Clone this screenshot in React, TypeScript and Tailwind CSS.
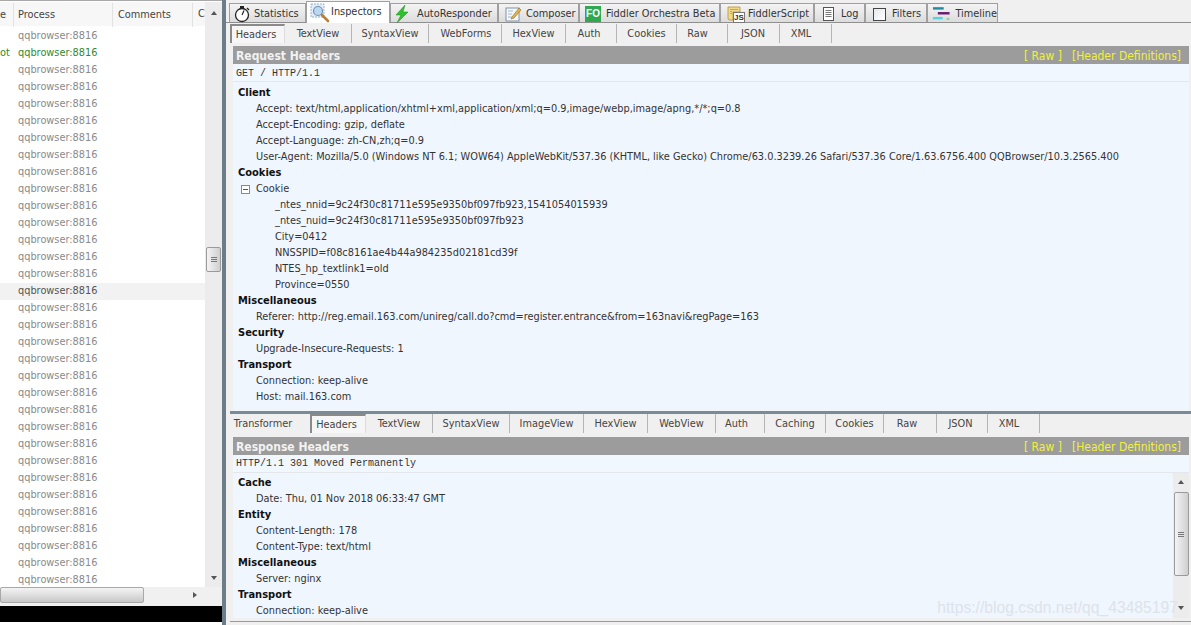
import React from 'react';

const StopwatchIcon = () => (
  <svg width="18" height="18" viewBox="0 0 18 18" fill="none">
    <circle cx="8" cy="10" r="6.5" stroke="#222" strokeWidth="1.3" fill="#fff" />
    <rect x="6" y="1" width="4" height="2" fill="#222" />
    <path d="M8 10 L10 5.5" stroke="#222" strokeWidth="1.2" />
    <path d="M13 3 L15 5" stroke="#222" strokeWidth="1.2" />
  </svg>
);

const InspectorIcon = () => (
  <svg width="20" height="20" viewBox="0 0 20 20" fill="none">
    <rect x="1" y="1" width="13" height="13" fill="#e4edf6" stroke="#9ab2cc" strokeDasharray="2 1" />
    <circle cx="8" cy="8" r="4.5" fill="#bcd7f0" stroke="#6f93b8" strokeWidth="1.2" />
    <path d="M12 12 L18 18" stroke="#b9803a" strokeWidth="2.6" strokeLinecap="round" />
  </svg>
);

const BoltIcon = () => (
  <svg width="18" height="18" viewBox="0 0 18 18">
    <path d="M12 0 L3 10 L8 10 L4 18 L15 7 L10 7 Z" fill="#2fc02f" stroke="#1c8f1c" strokeWidth="0.5" />
  </svg>
);

const ComposerIcon = () => (
  <svg width="18" height="18" viewBox="0 0 18 18" fill="none">
    <rect x="1" y="3" width="13" height="13" fill="#f4f7fb" stroke="#7f93a8" />
    <path d="M3 6 H8 M3 9 H7 M3 12 H7" stroke="#a9b8c8" />
    <path d="M7 12 L14 3 L16 5 L9 13 L6 14 Z" fill="#e2b44a" stroke="#8f6c20" strokeWidth="0.6" />
  </svg>
);

const ScriptIcon = () => (
  <div className="relative h-[18px] w-[18px]">
    <svg width="18" height="18" viewBox="0 0 18 18" fill="none">
      <path d="M1 2 H13 V7 H6 V15 H3 Q1 15 1 13 Z" fill="#f3d98a" stroke="#b08f30" strokeWidth="0.8" />
      <path d="M3 4.5 H11 M3 6.5 H5 M3 8.5 H5" stroke="#b08f30" strokeWidth="0.7" />
    </svg>
    <span className="absolute bottom-0 right-0 flex h-[11px] w-[12px] items-center justify-center border border-[#777] bg-white font-['Liberation_Sans',sans-serif] text-[8px] font-bold leading-none text-[#333]">
      JS
    </span>
  </div>
);

const LogIcon = () => (
  <svg width="14" height="16" viewBox="0 0 14 16" fill="none">
    <rect x="1.5" y="1.5" width="10" height="13" fill="#fff" stroke="#555" />
    <path d="M3.5 4.5 H9.5 M3.5 6.5 H9.5 M3.5 8.5 H9.5 M3.5 10.5 H9.5" stroke="#777" />
  </svg>
);

const TimelineIcon = () => (
  <svg width="20" height="16" viewBox="0 0 20 16">
    <rect x="1" y="1" width="11" height="2.5" fill="#1f8ea3" />
    <rect x="6" y="6" width="12" height="2.5" fill="#6a1b6e" />
    <rect x="1" y="11" width="10" height="2.5" fill="#4fd6e0" />
    <rect x="15" y="12" width="3" height="2" fill="#8fd0a0" />
  </svg>
);

const topTabs = [
  { label: 'Statistics', cls: 'w-[77px] pl-[4px] gap-[2px]', icon: <StopwatchIcon /> },
  { label: 'Inspectors', cls: 'w-[84px] pl-[3px] gap-[1px]', icon: <InspectorIcon />, active: true },
  { label: 'AutoResponder', cls: 'w-[108px] pl-[2px] gap-[6px]', icon: <BoltIcon /> },
  { label: 'Composer', cls: 'w-[81px] pl-[6px] gap-[3px]', icon: <ComposerIcon /> },
  {
    label: 'Fiddler Orchestra Beta',
    cls: 'w-[141px] pl-[5px] gap-[5px]',
    icon: (
      <span className="flex h-[16px] w-[16px] items-center justify-center bg-[#2fa84f] font-['Liberation_Sans',sans-serif] text-[10px] font-bold leading-none text-white">
        FO
      </span>
    ),
  },
  { label: 'FiddlerScript', cls: 'w-[94px] pl-[6px] gap-[3px]', icon: <ScriptIcon /> },
  { label: 'Log', cls: 'w-[51px] pl-[7px] gap-[5px]', icon: <LogIcon /> },
  {
    label: 'Filters',
    cls: 'w-[62px] pl-[7px] gap-[6px]',
    icon: <span className="h-[13px] w-[13px] border border-[#444] bg-[linear-gradient(135deg,#e4e9ee,#fff)]" />,
  },
  { label: 'Timeline', cls: 'w-[71px] pl-[4px] gap-[4px]', icon: <TimelineIcon /> },
];

const requestTabs = [
  { label: 'Headers', w: 'w-[55px]', active: true },
  { label: 'TextView', w: 'w-[67px]' },
  { label: 'SyntaxView', w: 'w-[77px]' },
  { label: 'WebForms', w: 'w-[73px] pl-[2px]' },
  { label: 'HexView', w: 'w-[64px]' },
  { label: 'Auth', w: 'w-[51px] pr-[4px]' },
  { label: 'Cookies', w: 'w-[60px]' },
  { label: 'Raw', w: 'w-[51px] pr-[9px]' },
  { label: 'JSON', w: 'w-[52px] pr-[1px]' },
  { label: 'XML', w: 'w-[52px] pr-[9px]' },
];

const responseTabs = [
  { label: 'Transformer', w: 'w-[80px] pr-[14px] border-r-0' },
  { label: 'Headers', w: 'w-[56px]', active: true },
  { label: 'TextView', w: 'w-[67px]' },
  { label: 'SyntaxView', w: 'w-[77px]' },
  { label: 'ImageView', w: 'w-[74px]' },
  { label: 'HexView', w: 'w-[64px]' },
  { label: 'WebView', w: 'w-[68px]' },
  { label: 'Auth', w: 'w-[49px] pr-[7px]' },
  { label: 'Caching', w: 'w-[61px]' },
  { label: 'Cookies', w: 'w-[58px]' },
  { label: 'Raw', w: 'w-[53px] pr-[6px]' },
  { label: 'JSON', w: 'w-[51px] pr-[3px]' },
  { label: 'XML', w: 'w-[52px] pr-[9px]' },
];

const rows = Array.from({ length: 33 }, (_, i) => i);

const SubTabs = ({ tabs }: { tabs: { label: string; w: string; active?: boolean }[] }) => (
  <div className="flex h-[19px] items-stretch">
    {tabs.map((t) => (
      <div
        key={t.label}
        className={`flex ${t.w} items-center justify-center pt-[1px] text-[#444] ${
          t.active
            ? 'border-l-2 border-t-2 border-r border-[#8a8a8a] border-r-[#ddd] bg-[#f6f6f6] pr-[4px] text-[#111]'
            : 'border-r border-[#b5b5b5]'
        }`}
      >
        {t.label}
      </div>
    ))}
  </div>
);

const GroupRow = ({ label }: { label: string }) => (
  <div className="h-[16px] pl-[5px] text-[11px] font-bold leading-[16px] text-[#111]">{label}</div>
);

const HeaderRow = ({ text }: { text: string }) => (
  <div className="h-[16px] whitespace-nowrap pl-[23px] leading-[16px] text-[#333]">{text}</div>
);

const CookieRow = ({ text }: { text: string }) => (
  <div className="h-[16px] whitespace-nowrap pl-[42px] leading-[16px] text-[#333]">{text}</div>
);

const TitleBar = ({ title }: { title: string }) => (
  <div className="flex h-[18px] items-center justify-between bg-[#9c9c9c] pl-[3px] pr-[8px] pt-[1px]">
    <span className="text-[12px] font-bold text-[#f2f2f2]">{title}</span>
    <span className="flex gap-[10px] text-[12px] text-[#f0f03c]">
      <span>[ Raw ]</span>
      <span>[Header Definitions]</span>
    </span>
  </div>
);

const Arrow = ({ dir }: { dir: 'up' | 'down' | 'right' }) => (
  <svg width="8" height="8" viewBox="0 0 8 8" className="shrink-0">
    {dir === 'up' && <path d="M1 6 L4 2 L7 6 Z" fill="#555" />}
    {dir === 'down' && <path d="M1 2 L7 2 L4 6 Z" fill="#555" />}
    {dir === 'right' && <path d="M2 1 L6 4 L2 7 Z" fill="#555" />}
  </svg>
);

const Grip = () => (
  <span className="flex flex-col gap-px">
    <span className="h-px w-[6px] bg-[#777]" />
    <span className="h-px w-[6px] bg-[#777]" />
    <span className="h-px w-[6px] bg-[#777]" />
  </span>
);

export default function App() {
  return (
    <div className="flex h-[625px] w-[1191px] overflow-hidden bg-[#f0f0f0] font-['DejaVu_Sans',sans-serif] text-[10.87px] font-stretch-condensed">
      {/* Session list */}
      <div className="flex w-[222px] shrink-0 flex-col border-t border-[#a8a8a8] bg-white pt-[1px]">
        <div className="flex h-[585px]">
          <div className="flex w-[205px] flex-col overflow-hidden">
            <div className="flex h-[24px] shrink-0 items-center bg-[#f7f7f7] pt-[1px] text-[#444]">
              <div className="w-[14px] overflow-hidden border-r border-[#e2e2e2] leading-[24px]">e</div>
              <div className="w-[99px] border-r border-[#e2e2e2] pl-[4px] leading-[24px]">Process</div>
              <div className="w-[80px] border-r border-[#e2e2e2] pl-[5px] leading-[24px]">Comments</div>
              <div className="pl-[5px]">C</div>
            </div>
            <div className="pt-[2px]">
              {rows.map((i) => (
                <div
                  key={i}
                  className={`flex h-[17px] items-center ${
                    i === 15 ? 'bg-[#f2f2f2] text-[#555]' : i === 1 ? 'text-[#2f8a2f]' : 'text-[#8a8a8a]'
                  }`}
                >
                  <span className="w-[18px] shrink-0">{i === 1 ? 'ot' : ''}</span>
                  <span>qqbrowser:8816</span>
                </div>
              ))}
            </div>
          </div>
          <div className="flex w-[17px] flex-col items-center bg-[#ececec] pt-[7px]">
            <Arrow dir="up" />
            <div className="mt-[230px] flex h-[25px] w-[15px] shrink-0 items-center justify-center rounded-[2px] border border-[#9a9a9a] bg-[linear-gradient(90deg,#f4f4f4,#cfcfcf)]">
              <Grip />
            </div>
            <div className="mt-[302px]">
              <Arrow dir="down" />
            </div>
          </div>
        </div>
        <div className="flex h-[16px] items-center bg-[#f0f0f0]">
          <div className="h-full w-[144px] rounded-[2px] border border-[#a8a8a8] bg-[linear-gradient(180deg,#f4f4f4,#c8c8c8)]" />
          <div className="ml-[47px]">
            <Arrow dir="right" />
          </div>
        </div>
        <div className="h-[3px] bg-[#f0f0f0]" />
        <div className="h-[16px] bg-black" />
        <div className="flex-1 bg-white" />
      </div>

      {/* Splitter */}
      <div className="w-[4px] shrink-0 bg-[#6c7c89]" />

      {/* Inspectors */}
      <div className="relative flex min-w-0 flex-1 flex-col pt-[3px]">
        <div className="flex h-[20px] items-end border-b border-[#8f8f8f] pl-[3px]">
          {topTabs.map((t) => (
            <div
              key={t.label}
              className={`flex ${t.cls} items-center whitespace-nowrap border border-b-0 border-[#a0a0a0] text-[#333] ${
                t.active ? '-mb-px h-[22px] bg-white' : 'h-[19px] bg-[linear-gradient(180deg,#f4f4f4,#dcdcdc)] pt-[2px]'
              }`}
            >
              {t.icon}
              <span>{t.label}</span>
            </div>
          ))}
        </div>

        {/* Request */}
        <div className="flex flex-col pl-[4px] pt-[1px]">
          <SubTabs tabs={requestTabs} />
          <div className="ml-[3px] mr-[2px] mt-[3px]">
            <TitleBar title="Request Headers" />
            <div className="h-[18px] border-b border-[#e4e8ec] bg-[#f1f7fe] pl-[3px] font-['Liberation_Mono',monospace] text-[10px] leading-[19px] text-[#333]">
              GET / HTTP/1.1
            </div>
            <div className="h-[329px] bg-[#f0f6fe] pt-[3px]">
              <GroupRow label="Client" />
              <HeaderRow text="Accept: text/html,application/xhtml+xml,application/xml;q=0.9,image/webp,image/apng,*/*;q=0.8" />
              <HeaderRow text="Accept-Encoding: gzip, deflate" />
              <HeaderRow text="Accept-Language: zh-CN,zh;q=0.9" />
              <HeaderRow text="User-Agent: Mozilla/5.0 (Windows NT 6.1; WOW64) AppleWebKit/537.36 (KHTML, like Gecko) Chrome/63.0.3239.26 Safari/537.36 Core/1.63.6756.400 QQBrowser/10.3.2565.400" />
              <GroupRow label="Cookies" />
              <div className="flex h-[16px] items-center pl-[8px] text-[#333]">
                <span className="flex h-[9px] w-[9px] items-center justify-center border border-[#8a8a8a] bg-white">
                  <span className="h-px w-[5px] bg-[#555]" />
                </span>
                <span className="ml-[6px]">Cookie</span>
              </div>
              <CookieRow text="_ntes_nnid=9c24f30c81711e595e9350bf097fb923,1541054015939" />
              <CookieRow text="_ntes_nuid=9c24f30c81711e595e9350bf097fb923" />
              <CookieRow text="City=0412" />
              <CookieRow text="NNSSPID=f08c8161ae4b44a984235d02181cd39f" />
              <CookieRow text="NTES_hp_textlink1=old" />
              <CookieRow text="Province=0550" />
              <GroupRow label="Miscellaneous" />
              <HeaderRow text="Referer: http://reg.email.163.com/unireg/call.do?cmd=register.entrance&from=163navi&regPage=163" />
              <GroupRow label="Security" />
              <HeaderRow text="Upgrade-Insecure-Requests: 1" />
              <GroupRow label="Transport" />
              <HeaderRow text="Connection: keep-alive" />
              <HeaderRow text="Host: mail.163.com" />
            </div>
          </div>
        </div>

        {/* Horizontal splitter */}
        <div className="ml-[4px] h-[3px] shrink-0 bg-[#7b8a96]" />

        {/* Response */}
        <div className="flex flex-col pl-[4px]">
          <SubTabs tabs={responseTabs} />
          <div className="ml-[3px] mr-[2px] mt-[4px]">
            <TitleBar title="Response Headers" />
            <div className="h-[18px] border-b border-[#e4e8ec] bg-[#f1f7fe] pl-[3px] font-['Liberation_Mono',monospace] text-[10px] leading-[17px] text-[#333]">
              HTTP/1.1 301 Moved Permanently
            </div>
            <div className="flex h-[145px] bg-[#f0f6fe]">
              <div className="flex-1 pt-[2px]">
                <GroupRow label="Cache" />
                <HeaderRow text="Date: Thu, 01 Nov 2018 06:33:47 GMT" />
                <GroupRow label="Entity" />
                <HeaderRow text="Content-Length: 178" />
                <HeaderRow text="Content-Type: text/html" />
                <GroupRow label="Miscellaneous" />
                <HeaderRow text="Server: nginx" />
                <GroupRow label="Transport" />
                <HeaderRow text="Connection: keep-alive" />
              </div>
              <div className="flex w-[16px] flex-col items-center bg-[#ececec] pt-[5px]">
                <Arrow dir="up" />
                <div className="mt-[6px] flex h-[84px] w-[15px] shrink-0 items-center justify-center rounded-[2px] border border-[#9a9a9a] bg-[linear-gradient(90deg,#f4f4f4,#cfcfcf)]">
                  <Grip />
                </div>
                <div className="mt-[28px]">
                  <Arrow dir="down" />
                </div>
              </div>
            </div>
          </div>
        </div>
        <div className="ml-[4px] mt-[3px] h-px bg-[#9a9a9a]" />

        {/* Watermark */}
        <span className="absolute right-[13px] top-[596px] font-['Liberation_Sans',sans-serif] text-[15.7px] text-[#dde3ea]">https://blog.csdn.net/qq_43485197</span>
      </div>
    </div>
  );
}
